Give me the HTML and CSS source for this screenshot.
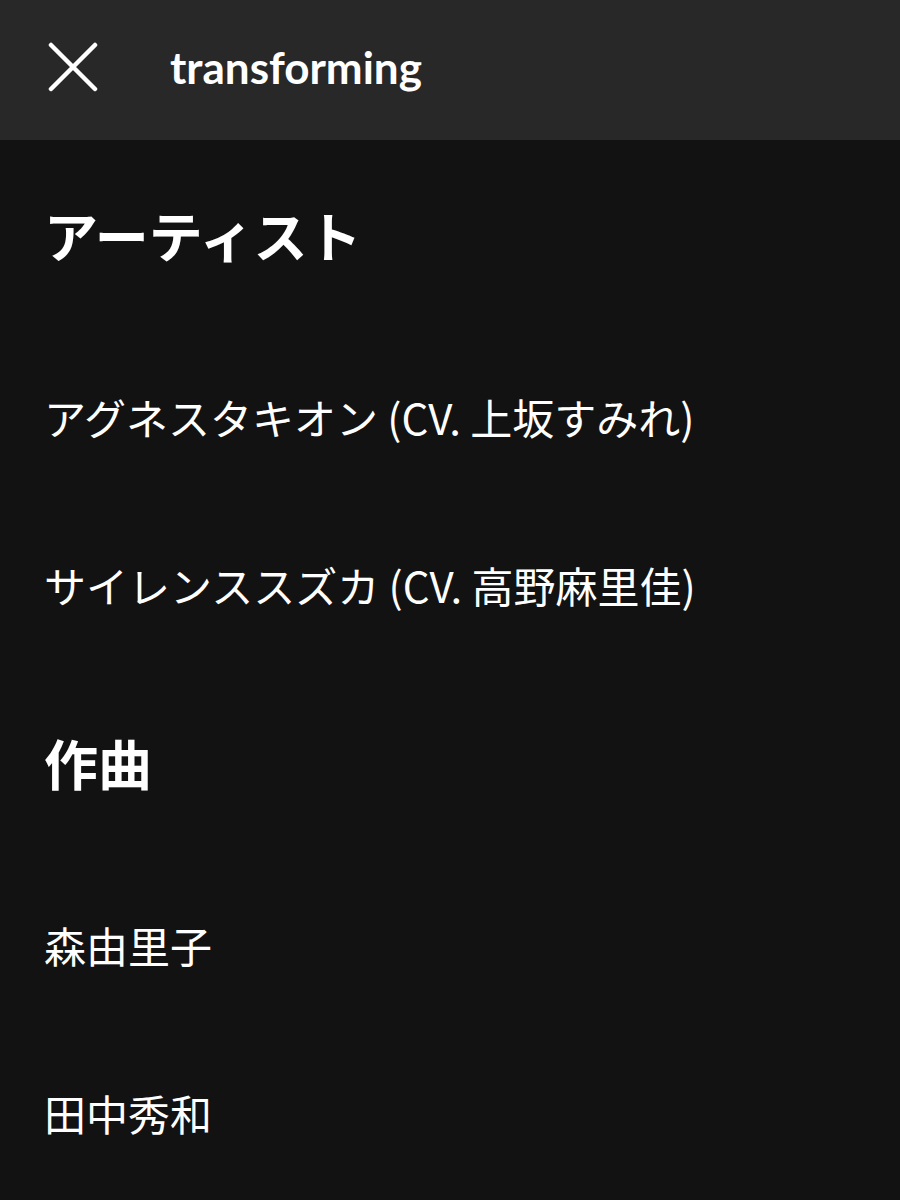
FILE: index.html
```html
<!DOCTYPE html>
<html lang="ja">
<head>
<meta charset="utf-8">
<link rel="stylesheet" href="styles.css">
</head>
<body>
<header class="topbar">
  <button class="close" aria-label="閉じる">
    <svg width="50" height="50" viewBox="0 0 50 50"><path d="M3 3 L47 47 M47 3 L3 47" stroke="#fff" stroke-width="4.5" stroke-linecap="round" fill="none"/></svg>
  </button>
  <h1 class="title">transforming</h1>
</header>
<main class="content">
  <section class="group">
    <h2 class="group-title">アーティスト</h2>
    <div class="item">アグネスタキオン (CV. 上坂すみれ)</div>
    <div class="item">サイレンススズカ (CV. 高野麻里佳)</div>
  </section>
  <section class="group">
    <h2 class="group-title">作曲</h2>
    <div class="item">森由里子</div>
    <div class="item">田中秀和</div>
  </section>
</main>
</body>
</html>
```

FILE: styles.css
```css
html, body {
  margin: 0;
  padding: 0;
  background: #121212;
  color: #fff;
  font-family: "Noto Sans CJK JP", "Noto Sans", sans-serif;
}
.topbar {
  height: 140px;
  background: #282828;
  display: flex;
  align-items: center;
  padding: 0 0 6px 48px;
  box-sizing: border-box;
}
.close {
  background: none;
  border: 0;
  padding: 0;
  width: 50px;
  height: 50px;
  display: flex;
}
.title {
  margin: 0 0 0 72px;
  font-family: "Lato", "Noto Sans", sans-serif;
  font-weight: 700;
  font-size: 44px;
  letter-spacing: 0;
}
.content {
  padding-top: 0;
}
.group-title {
  margin: 0;
  height: 192px;
  display: flex;
  align-items: center;
  padding: 0 0 4px 44px;
  font-size: 54px;
  font-weight: 700;
  box-sizing: border-box;
}
.item {
  height: 168px;
  display: flex;
  align-items: center;
  padding-left: 44px;
  font-size: 42px;
  font-weight: 400;
  box-sizing: border-box;
}
```
